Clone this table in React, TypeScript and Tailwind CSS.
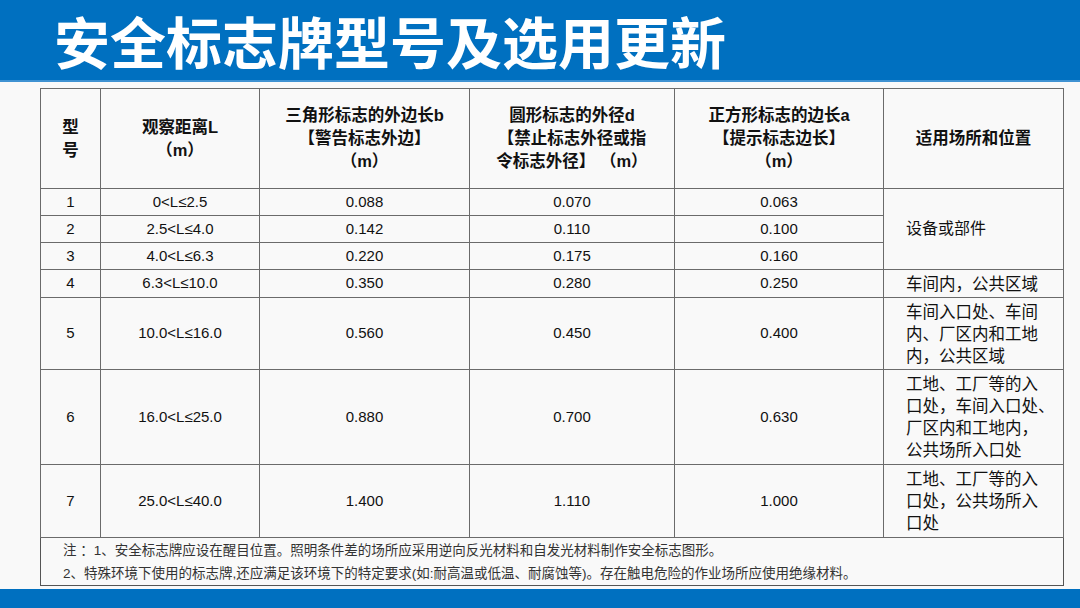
import React from 'react';

const rows = [
  { n: '1', l: '0<L≤2.5', b: '0.088', d: '0.070', a: '0.063', h: 'h-[27px]' },
  { n: '2', l: '2.5<L≤4.0', b: '0.142', d: '0.110', a: '0.100', h: 'h-[27px]' },
  { n: '3', l: '4.0<L≤6.3', b: '0.220', d: '0.175', a: '0.160', h: 'h-[27px]' },
  { n: '4', l: '6.3<L≤10.0', b: '0.350', d: '0.280', a: '0.250', h: 'h-[28px]', place: ['车间内，公共区域'] },
  { n: '5', l: '10.0<L≤16.0', b: '0.560', d: '0.450', a: '0.400', h: 'h-[72px]', place: ['车间入口处、车间', '内、厂区内和工地', '内，公共区域'] },
  { n: '6', l: '16.0<L≤25.0', b: '0.880', d: '0.700', a: '0.630', h: 'h-[95px]', place: ['工地、工厂等的入', '口处，车间入口处、', '厂区内和工地内，', '公共场所入口处'] },
  { n: '7', l: '25.0<L≤40.0', b: '1.400', d: '1.110', a: '1.000', h: 'h-[73px]', place: ['工地、工厂等的入', '口处，公共场所入', '口处'] },
];

const cjk = { fontFamily: '"Liberation Sans", "Noto Sans CJK SC", sans-serif' };
const cell = 'border border-[#6b6b6b] text-center align-middle p-0';

export default function App() {
  return (
    <div className="w-[1080px] h-[608px] bg-[#f9f9f9] flex flex-col overflow-hidden" style={cjk}>
      <div className="h-[82px] bg-[#0070c0] border-b-2 border-[#3f92d2] flex items-center pl-[54px]">
        <h1
          className="text-white text-[56px] font-bold leading-none"
          style={{ fontFamily: '"Noto Sans CJK SC", sans-serif' }}
        >
          安全标志牌型号及选用更新
        </h1>
      </div>

      <div className="pl-[40px] pt-[6px]">
        <table className="w-[1023px] table-fixed border-collapse border border-[#555] text-[#111] text-[15px]">
          <colgroup>
            <col className="w-[60px]" />
            <col className="w-[159px]" />
            <col className="w-[210px]" />
            <col className="w-[205px]" />
            <col className="w-[209px]" />
            <col className="w-[180px]" />
          </colgroup>
          <thead>
            <tr className="h-[100px] font-bold text-[16.5px] leading-[23px]">
              <th className={cell}>型<br />号</th>
              <th className={cell}>观察距离L<br />（m）</th>
              <th className={cell}>三角形标志的外边长b<br />【警告标志外边】<br />（m）</th>
              <th className={cell}>圆形标志的外径d<br />【禁止标志外径或指<br />令标志外径】 （m）</th>
              <th className={cell}>正方形标志的边长a<br />【提示标志边长】<br />（m）</th>
              <th className={cell}>适用场所和位置</th>
            </tr>
          </thead>
          <tbody>
            {rows.map((r, i) => (
              <tr key={r.n} className={r.h}>
                <td className={cell}>{r.n}</td>
                <td className={cell}>{r.l}</td>
                <td className={cell}>{r.b}</td>
                <td className={cell}>{r.d}</td>
                <td className={cell}>{r.a}</td>
                {i === 0 && (
                  <td rowSpan={3} className="border border-[#6b6b6b] align-middle pl-[22px] text-left text-[16px]">
                    设备或部件
                  </td>
                )}
                {r.place && (
                  <td className="border border-[#6b6b6b] align-middle pl-[22px] text-left text-[16.5px] leading-[22px]">
                    {r.place.map((p, j) => (
                      <div key={j} className="whitespace-nowrap">{p}</div>
                    ))}
                  </td>
                )}
              </tr>
            ))}
            <tr className="h-[48px]">
              <td colSpan={6} className="border border-[#555] text-left align-middle pl-[22px] text-[13.5px] leading-[23px] text-[#333]">
                <div>注 ：1、安全标志牌应设在醒目位置。照明条件差的场所应采用逆向反光材料和自发光材料制作安全标志图形。</div>
                <div>2、特殊环境下使用的标志牌,还应满足该环境下的特定要求(如:耐高温或低温、耐腐蚀等)。存在触电危险的作业场所应使用绝缘材料。</div>
              </td>
            </tr>
          </tbody>
        </table>
      </div>

      <div className="mt-auto h-[19px] bg-[#0070c0]" />
    </div>
  );
}
